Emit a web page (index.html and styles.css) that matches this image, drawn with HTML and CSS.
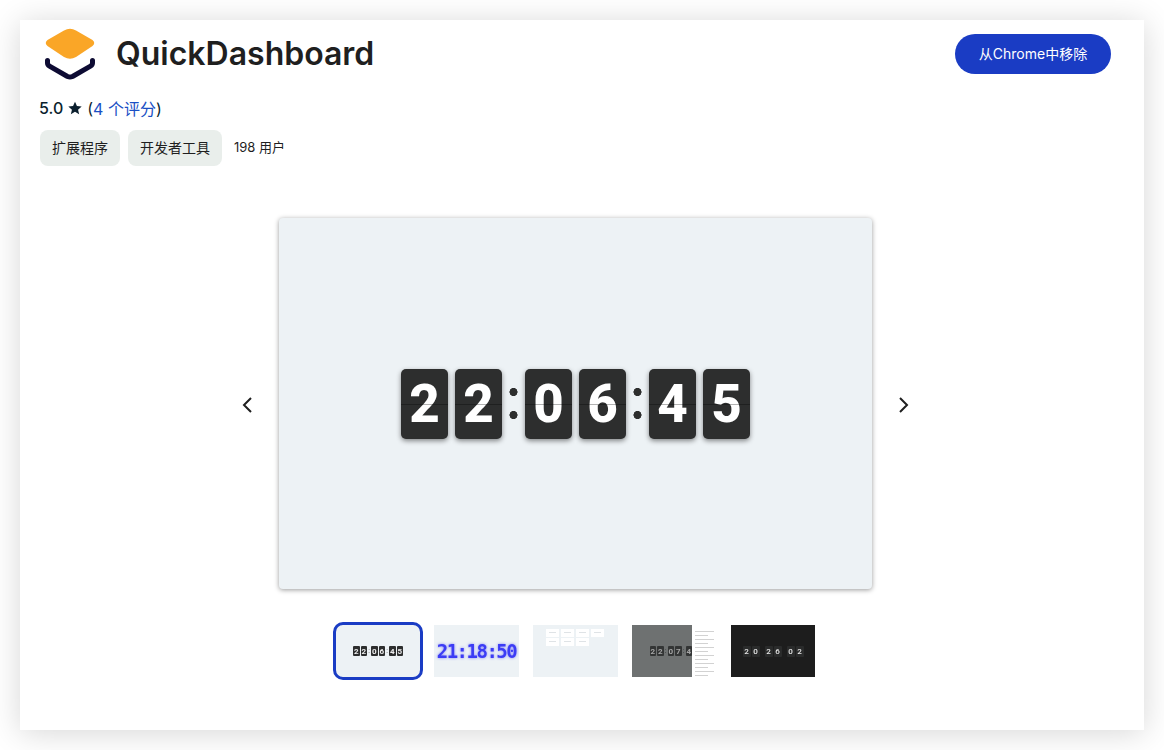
FILE: index.html
```html
<!DOCTYPE html>
<html lang="zh-CN">
<head>
    <meta charset="UTF-8">
    <meta name="viewport" content="width=device-width, initial-scale=1.0">
    <title>QuickDashboard</title>
    <link rel="stylesheet" href="styles.css">
</head>
<body>
    <div class="card">
        <div class="header">
            <div class="brand">
                <svg class="logo" width="60" height="60" viewBox="0 0 60 60">
                    <path d="M24 6.500 Q30 3 36 6.500 L52.500 16 Q56 19 52.500 22 L36 33 Q30 36.500 24 33 L7.500 22 Q4 19 7.500 16 Z" fill="#faa627"/>
                    <path d="M7.500 36.500 V39 Q7.500 41 9.500 42.200 L27.500 52.500 Q30 53.500 32.500 52.500 L50.500 42.200 Q52.500 41 52.500 39 V36.500" fill="none" stroke="#0d0b33" stroke-width="5" stroke-linecap="round" stroke-linejoin="round"/>
                </svg>
                <h1>QuickDashboard</h1>
            </div>
            <button class="remove">从Chrome中移除</button>
        </div>

        <div class="rating">
            <span class="score">5.0</span>
            <svg class="star" width="16" height="16" viewBox="0 0 24 24"><path d="M12 2.500 L14.900 9.100 L22 9.800 L16.600 14.500 L18.200 21.500 L12 17.800 L5.800 21.500 L7.400 14.500 L2 9.800 L9.100 9.100 Z" fill="#0b1f2e"/></svg>
            <span>(<a href="#">4 个评分</a>)</span>
        </div>

        <div class="tags">
            <span class="chip">扩展程序</span>
            <span class="chip">开发者工具</span>
            <span class="users">198 用户</span>
        </div>

        <div class="stage">
            <svg class="arrow" width="24" height="24" viewBox="0 0 24 24"><path d="M16 5 L9 12 L16 19" fill="none" stroke="#1f1f1f" stroke-width="2"/></svg>
            <div class="shot">
                <div class="clock">
                    <span class="flip">2</span><span class="flip">2</span><span class="dots"></span>
                    <span class="flip">0</span><span class="flip">6</span><span class="dots"></span>
                    <span class="flip">4</span><span class="flip">5</span>
                </div>
            </div>
            <svg class="arrow" width="24" height="24" viewBox="0 0 24 24"><path d="M8 5 L15 12 L8 19" fill="none" stroke="#1f1f1f" stroke-width="2"/></svg>
        </div>

        <div class="thumbs">
            <div class="thumb active">
                <div class="mini">
                    <span>2</span><span>2</span><i>:</i><span>0</span><span>6</span><i>:</i><span>4</span><span>5</span>
                </div>
            </div>
            <div class="thumb pixel">21:18:50</div>
            <div class="thumb notes">
                <div class="note-grid">
                    <div class="note"></div><div class="note"></div><div class="note"></div><div class="note"></div>
                    <div class="note"></div><div class="note"></div><div class="note"></div>
                </div>
            </div>
            <div class="thumb split">
                <div class="split-left">
                    <div class="mini dim">
                        <span>2</span><span>2</span><i>:</i><span>0</span><span>7</span><i>:</i><span>4</span>
                    </div>
                </div>
                <div class="split-panel">
                    <b></b><b></b><b></b><b></b><b></b><b></b><b></b><b></b><b></b><b></b><b></b><b></b>
                </div>
            </div>
            <div class="thumb dark">
                <div class="date">
                    <span>2</span><span>0</span><em></em><span>2</span><span>6</span><em></em><span>0</span><span>2</span>
                </div>
            </div>
        </div>
    </div>
</body>
</html>
```

FILE: styles.css
```css
*{
    margin: 0;
    padding: 0;
    box-sizing: border-box;
    font-family: Inter, "Noto Sans CJK SC", sans-serif;
}
body{
    background-color: white;
    padding: 20px;
    height: 750px;
    overflow: hidden;
}
.card{
    height: 710px;
    padding: 4px 33px 0 20px;
    background-color: white;
    box-shadow: 0 3px 30px rgba(0,0,0,0.16);
}
.header{
    display: flex;
    justify-content: space-between;
    align-items: center;
    height: 60px;
}
.brand{
    display: flex;
    align-items: center;
    gap: 16px;
}
.logo{
    display: block;
}
h1{
    padding-bottom: 2px;
    font-size: 32px;
    font-weight: 600;
    color: #1f1f1f;
}
.remove{
    width: 156px;
    height: 40px;
    padding-bottom: 3px;
    border: none;
    border-radius: 20px;
    background-color: #1a3cc4;
    color: white;
    font-size: 14px;
    font-weight: 400;
}
.rating{
    display: flex;
    align-items: center;
    gap: 4px;
    height: 22px;
    margin-top: 13px;
    margin-left: -1px;
    font-size: 16px;
    color: #0b1f2e;
}
.rating .score{
    font-weight: 500;
}
.rating a{
    color: #1a4fc4;
    text-decoration: none;
}
.tags{
    display: flex;
    align-items: center;
    gap: 8px;
    margin-top: 11px;
}
.chip{
    display: flex;
    align-items: center;
    justify-content: center;
    height: 36px;
    padding: 0 12px 3px;
    border-radius: 8px;
    background-color: #e9eeeb;
    color: #1f1f1f;
    font-size: 14px;
}
.users{
    margin-left: 4px;
    padding-bottom: 4px;
    font-size: 13px;
    color: #1f1f1f;
}
.stage{
    display: flex;
    justify-content: center;
    align-items: center;
    gap: 20px;
    margin-top: 52px;
}
.arrow{
    display: block;
    margin-top: 3px;
}
.shot{
    display: flex;
    justify-content: center;
    align-items: center;
    width: 593px;
    height: 371px;
    border-radius: 4px;
    background-color: #edf2f5;
    box-shadow: 0 1px 5px rgba(0,0,0,0.4);
}
.clock{
    display: flex;
    align-items: center;
    gap: 7px;
}
.flip{
    position: relative;
    display: flex;
    justify-content: center;
    align-items: center;
    width: 47px;
    height: 70px;
    border-radius: 5px;
    background-color: #2d2e2e;
    box-shadow: 0 2px 5px rgba(0,0,0,0.45);
    color: white;
    font-family: Roboto, sans-serif;
    font-size: 53px;
    font-weight: 800;
}
.flip::after{
    content: "";
    position: absolute;
    left: 0;
    right: 0;
    top: 35px;
    height: 1px;
    background-color: rgba(0,0,0,0.3);
}
.dots{
    width: 9px;
    height: 31px;
    background: radial-gradient(circle at 4.500px 4px, #2d2e2e 3.800px, transparent 4.300px),
                radial-gradient(circle at 4.500px 27px, #2d2e2e 3.800px, transparent 4.300px);
}
.thumbs{
    display: flex;
    justify-content: center;
    align-items: center;
    gap: 14px;
    margin-top: 33px;
    margin-left: -3px;
}
.thumb{
    display: flex;
    justify-content: center;
    align-items: center;
    width: 85px;
    height: 52px;
    overflow: hidden;
    background-color: #edf2f5;
}
.thumb.active{
    width: 90px;
    height: 58px;
    margin-right: -3px;
    border: 3px solid #1a3cc4;
    border-radius: 10px;
}
.mini{
    display: flex;
    align-items: center;
    gap: 1px;
    filter: blur(0.3px);
}
.mini span{
    display: flex;
    justify-content: center;
    align-items: center;
    width: 6.500px;
    height: 10px;
    border-radius: 1px;
    background-color: #2d2e2e;
    color: #eeeeee;
    font-family: Roboto, sans-serif;
    font-size: 8px;
    font-weight: 700;
}
.mini i{
    width: 2px;
    font-family: Roboto, sans-serif;
    font-size: 7px;
    font-style: normal;
    color: #555555;
    text-align: center;
    line-height: 10px;
}
.pixel{
    color: #3c3cf5;
    font-family: "DejaVu Sans Mono", monospace;
    font-size: 19px;
    font-weight: 700;
    letter-spacing: -1.500px;
    text-shadow: 0 0 3px #7f7ff5;
    filter: blur(0.4px);
}
.notes{
    align-items: flex-start;
    justify-content: flex-start;
    padding: 4px 0 0 13px;
}
.note-grid{
    display: grid;
    grid-template-columns: repeat(4, 13px);
    gap: 1px 2px;
    filter: blur(0.3px);
}
.note{
    height: 8px;
    background: linear-gradient(#dfe3e6, #dfe3e6) no-repeat 3px 3px / 7px 1px, white;
}
.split{
    align-items: stretch;
    justify-content: flex-start;
    background-color: white;
}
.split-left{
    display: flex;
    align-items: center;
    justify-content: flex-end;
    width: 60px;
    overflow: hidden;
    background-color: #6e7171;
}
.mini.dim span{
    background-color: #333535;
    color: #a5a5a5;
}
.mini.dim i{
    color: #333535;
}
.split-panel{
    display: flex;
    flex-direction: column;
    gap: 3px;
    flex: 1;
    padding: 6px 3px 0 3px;
    filter: blur(0.4px);
}
.split-panel b{
    display: block;
    height: 1px;
    background-color: #d2d2d2;
}
.split-panel b:nth-child(even){
    width: 70%;
}
.dark{
    width: 84px;
    background-color: #1d1d1d;
}
.date{
    display: flex;
    gap: 1px;
    filter: blur(0.3px);
}
.date span{
    display: flex;
    justify-content: center;
    align-items: center;
    width: 8px;
    height: 11px;
    border-radius: 1px;
    background-color: #2a2b2b;
    color: #e8e8e8;
    font-family: Roboto, sans-serif;
    font-size: 8px;
    font-weight: 500;
}
.date em{
    width: 3px;
}
```
